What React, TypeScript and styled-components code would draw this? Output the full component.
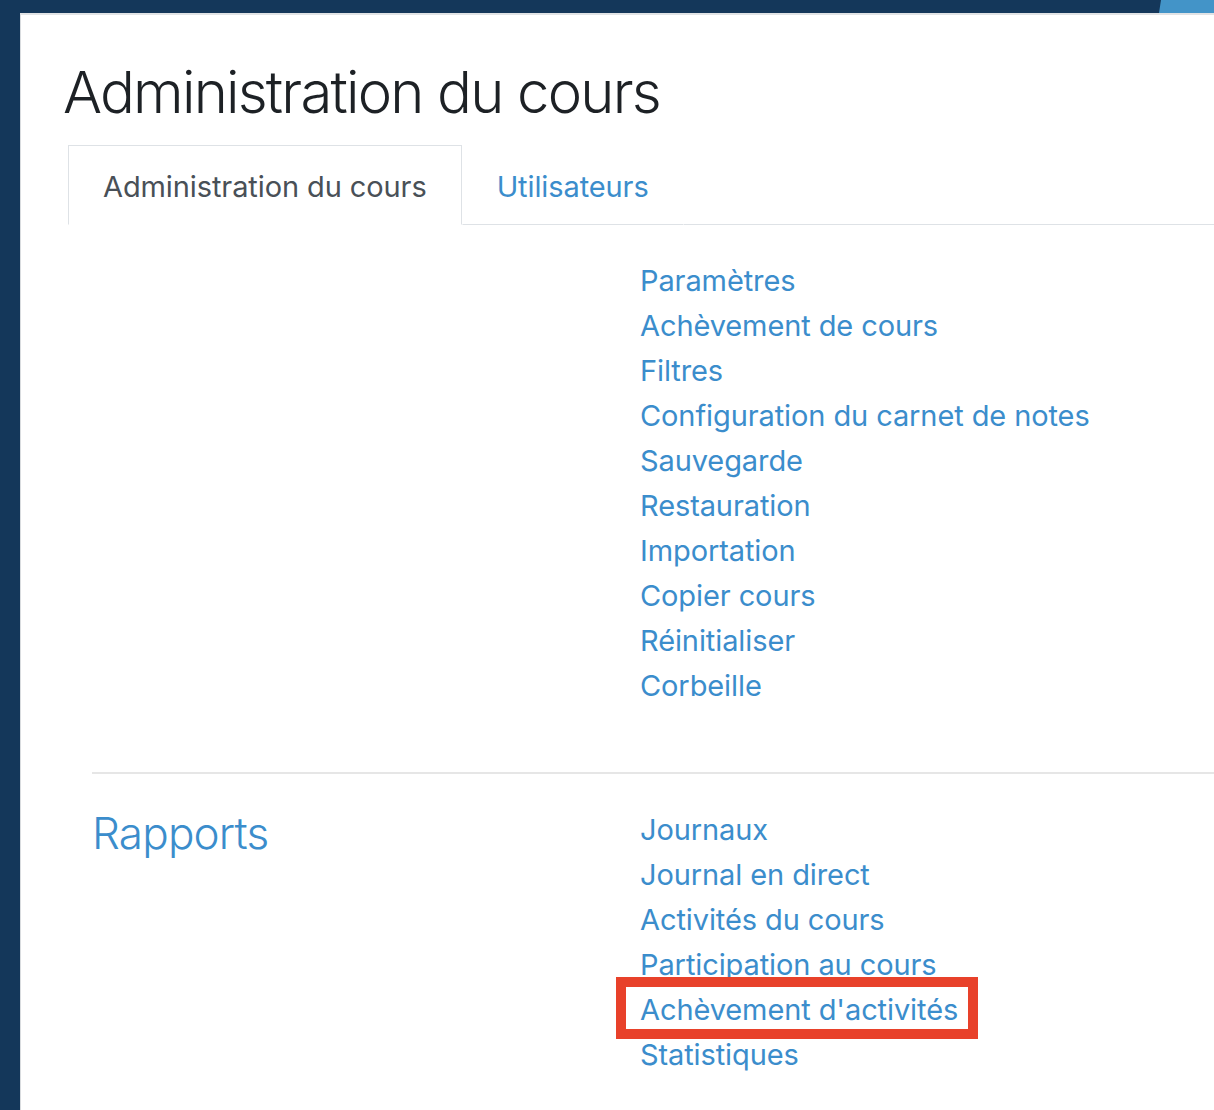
import React from 'react';
import styled, {createGlobalStyle} from "styled-components";

const GlobalStyle = createGlobalStyle`
  html, body {
    margin: 0;
    padding: 0;
    background: #14375a;
  }
  body {
    font-family: Inter, "Noto Sans", sans-serif;
    overflow: hidden;
  }
`

const settings = [
    "Paramètres",
    "Achèvement de cours",
    "Filtres",
    "Configuration du carnet de notes",
    "Sauvegarde",
    "Restauration",
    "Importation",
    "Copier cours",
    "Réinitialiser",
    "Corbeille",
];

const reports = [
    "Journaux",
    "Journal en direct",
    "Activités du cours",
    "Participation au cours",
    "Achèvement d'activités",
    "Statistiques",
];

export default function App() {
    return (
        <Shell>
            <GlobalStyle/>
            <TopBar>
                <TopBarAccent/>
            </TopBar>
            <Body>
                <SideStrip/>
                <Main>
                    <Title>Administration du cours</Title>
                    <Tabs>
                        <Tab active>Administration du cours</Tab>
                        <Tab>Utilisateurs</Tab>
                        <TabFill/>
                    </Tabs>
                    <Content>
                        <Section>
                            <SectionHeading/>
                            <LinkList>
                                {settings.map(item => (
                                    <li key={item}><LinkItem href="#">{item}</LinkItem></li>
                                ))}
                            </LinkList>
                        </Section>
                        <Divider/>
                        <Section>
                            <SectionHeading>Rapports</SectionHeading>
                            <LinkList>
                                {reports.map(item => (
                                    <li key={item}>
                                        <LinkItem href="#" highlighted={item === "Achèvement d'activités"}>{item}</LinkItem>
                                    </li>
                                ))}
                            </LinkList>
                        </Section>
                    </Content>
                </Main>
            </Body>
        </Shell>
    );
}

const Shell = styled.div`
  display: flex;
  flex-direction: column;
  width: 1214px;
  height: 1110px;
  overflow: hidden;
`

const TopBar = styled.div`
  display: flex;
  justify-content: flex-end;
  height: 13px;
  flex-shrink: 0;
  background: #14375a;
`

const TopBarAccent = styled.div`
  width: 55px;
  height: 100%;
  background: #4394c8;
  clip-path: polygon(2px 0, 100% 0, 100% 100%, 0 100%);
`

const Body = styled.div`
  display: flex;
  flex: 1;
  min-height: 0;
`

const SideStrip = styled.div`
  width: 20px;
  flex-shrink: 0;
  background: #14375a;
`

const Main = styled.main`
  flex: 1;
  background: #fff;
  border-left: 1px solid #d9dcdf;
  border-top: 2px solid #e1e3e5;
  padding: 43px 0 0 42px;
  overflow: hidden;
`

const Title = styled.h1`
  margin: 0 0 17px;
  font-size: 58px;
  font-weight: 300;
  line-height: 1.2;
  letter-spacing: -1.8px;
  color: #1d2125;
`

const Tabs = styled.nav`
  display: flex;
  margin-left: 5px;
  height: 80px;
`

const Tab = styled.a<{ active?: boolean }>`
  display: flex;
  align-items: center;
  padding: 3px 34px 0;
  font-size: 29px;
  letter-spacing: -0.1px;
  text-decoration: none;
  cursor: pointer;
  color: ${p => p.active ? "#495057" : "#3b8dcc"};
  border: 1px solid ${p => p.active ? "#dee2e6" : "transparent"};
  border-bottom: 1px solid ${p => p.active ? "transparent" : "#dee2e6"};
  box-sizing: border-box;
`

const TabFill = styled.div`
  flex: 1;
  border-bottom: 1px solid #dee2e6;
`

const Content = styled.div`
  margin-left: 29px;
  padding-top: 33px;
`

const Section = styled.section`
  display: grid;
  grid-template-columns: 548px 1fr;
`

const SectionHeading = styled.h2`
  margin: 0;
  font-size: 44px;
  font-weight: 300;
  line-height: 1.2;
  letter-spacing: -0.8px;
  color: #3b8dcc;
`

const LinkList = styled.ul`
  list-style: none;
  margin: 0;
  padding: 0;
  font-size: 29px;
  line-height: 45px;
`

const LinkItem = styled.a<{ highlighted?: boolean }>`
  position: relative;
  display: inline-block;
  vertical-align: top;
  letter-spacing: -0.1px;
  color: #3b8dcc;
  text-decoration: none;

  ${p => p.highlighted && `
    &::after {
      content: "";
      position: absolute;
      top: -10px;
      bottom: -7px;
      left: -24px;
      right: -20px;
      border: 10px solid #e8412a;
      box-sizing: border-box;
    }
  `}
`

const Divider = styled.hr`
  margin: 64px 0 33px;
  border: 0;
  border-top: 2px solid #e6e6e6;
`
